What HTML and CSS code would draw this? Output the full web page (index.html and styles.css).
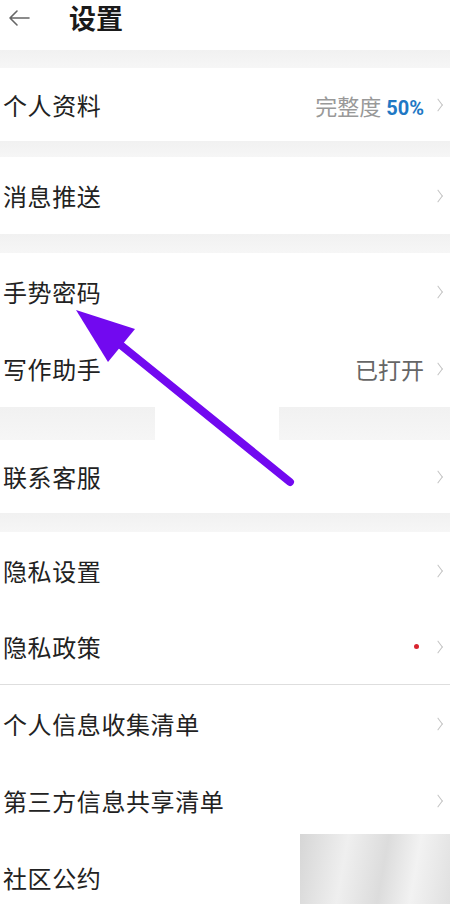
FILE: index.html
```html
<!DOCTYPE html>
<html lang="zh-CN">

<head>
    <meta charset="UTF-8">
    <meta name="viewport" content="width=device-width, initial-scale=1.0">
    <title>设置</title>
    <link rel="stylesheet" href="styles.css">
</head>

<body>

    <header class="topbar">
        <svg class="back" width="22" height="18" viewBox="0 0 22 18">
            <path d="M21 9H2M9 2L2 9l7 7" fill="none" stroke="#666" stroke-width="1.6" stroke-linecap="round" stroke-linejoin="round" />
        </svg>
        <h1>设置</h1>
    </header>

    <div class="gap gap-top"></div>

    <section class="group">
        <div class="row row-short">
            <span class="label">个人资料</span>
            <span class="extra">完整度 <b class="pct">50%</b></span>
            <i class="chev"></i>
        </div>
    </section>

    <div class="gap"></div>

    <section class="group">
        <div class="row">
            <span class="label">消息推送</span>
            <i class="chev"></i>
        </div>
    </section>

    <div class="gap gap-mid"></div>

    <section class="group">
        <div class="row">
            <span class="label">手势密码</span>
            <i class="chev"></i>
        </div>
        <div class="row">
            <span class="label">写作助手</span>
            <span class="extra dark">已打开</span>
            <i class="chev"></i>
        </div>
    </section>

    <div class="gap gap-big"></div>

    <section class="group">
        <div class="row row-short">
            <span class="label">联系客服</span>
            <i class="chev"></i>
        </div>
    </section>

    <div class="gap gap-mid"></div>

    <section class="group">
        <div class="row">
            <span class="label">隐私设置</span>
            <i class="chev"></i>
        </div>
        <div class="row row-line">
            <span class="label">隐私政策</span>
            <i class="dot"></i>
            <i class="chev"></i>
        </div>
        <div class="row">
            <span class="label">个人信息收集清单</span>
            <i class="chev"></i>
        </div>
        <div class="row">
            <span class="label">第三方信息共享清单</span>
            <i class="chev"></i>
        </div>
        <div class="row">
            <span class="label">社区公约</span>
        </div>
    </section>

    <!-- annotation on top of the screenshot -->
    <svg class="mark" width="450" height="904" viewBox="0 0 450 904">
        <rect x="155" y="406" width="124" height="35" fill="#fff" />
        <line x1="290" y1="482" x2="112" y2="338" stroke="#7209f0" stroke-width="8" stroke-linecap="round" />
        <polygon points="76,310 135,329 108,362" fill="#7209f0" />
    </svg>

    <div class="smudge"></div>

</body>

</html>
```

FILE: styles.css
```css
html,
body {
    margin: 0;
    padding: 0;
    background: #fff;
    font-family: "Noto Sans CJK SC", "Noto Sans", sans-serif;
    color: #222;
    overflow: hidden;
}

body {
    position: relative;
    width: 450px;
    height: 904px;
}

/* Top bar */

.topbar {
    height: 50px;
    display: flex;
    align-items: center;
    padding: 0 0 14px 8px;
    box-sizing: border-box;
}

.topbar h1 {
    margin: 0 0 0 39px;
    font-size: 27px;
    line-height: 34px;
    font-weight: 700;
    color: #1a1a1a;
}

/* Gray separators */

.gap {
    height: 16px;
    background: linear-gradient(#f1f1f1, #f6f6f6);
}

.gap-top {
    height: 18px;
}

.gap-mid {
    height: 19px;
}

.gap-big {
    height: 33px;
}

/* Rows */

.row {
    height: 77px;
    display: flex;
    align-items: center;
    padding: 0 5px 0 3px;
    box-sizing: border-box;
}

.row-short {
    height: 73px;
}

.row-line {
    height: 76px;
    border-bottom: 1px solid #dedede;
}

.label {
    font-size: 24px;
    flex: 1;
    letter-spacing: 0.6px;
}

.extra {
    font-size: 22px;
    color: #999;
    margin-right: 10px;
}

.extra.dark {
    font-size: 23px;
    color: #666;
}

.pct {
    font-family: Roboto, "Noto Sans", sans-serif;
    font-weight: 700;
    color: #1f78c4;
    font-size: 20px;
}

.chev {
    width: 7px;
    height: 7px;
    border-top: 1.4px solid #c2c2c2;
    border-right: 1.4px solid #c2c2c2;
    transform: rotate(45deg) skew(8deg, 8deg);
    margin-right: 3px;
}

.dot {
    width: 5px;
    height: 5px;
    border-radius: 50%;
    background: #d8242f;
    margin-right: 15px;
}

/* Overlays */

.mark {
    position: absolute;
    left: 0;
    top: 0;
    pointer-events: none;
}

.smudge {
    position: absolute;
    left: 300px;
    top: 834px;
    width: 150px;
    height: 70px;
    background: linear-gradient(100deg, #d6d6d6 0%, #efefef 30%, #dcdcdc 55%, #f2f2f2 75%, #e0e0e0 100%);
}
```
